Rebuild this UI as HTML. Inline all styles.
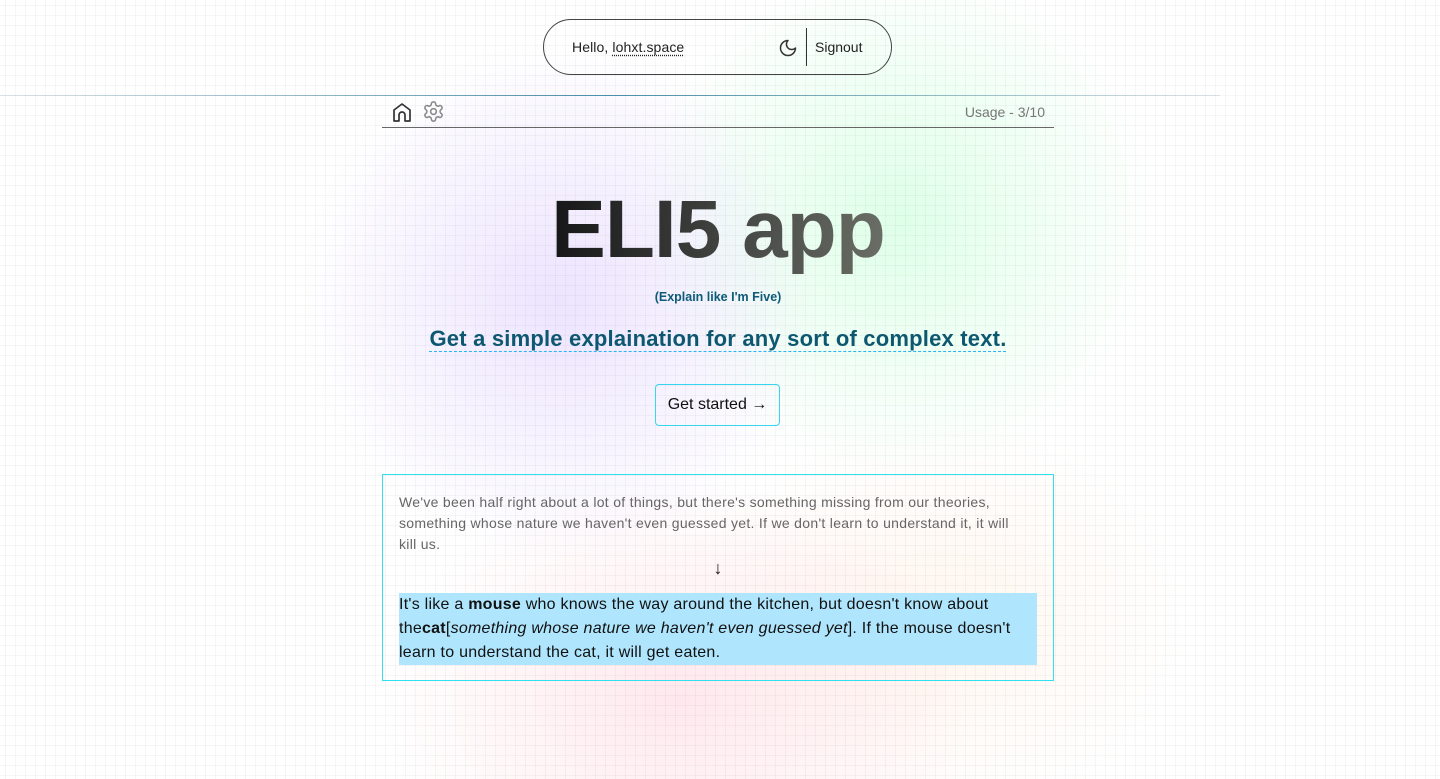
<!DOCTYPE html>
<html><head><meta charset="utf-8"><style>
html,body{margin:0;padding:0;width:1440px;height:779px;overflow:hidden;font-family:"Liberation Sans",sans-serif;}
body{background:#fff;position:relative;}
.bg{position:absolute;inset:0;background:
radial-gradient(ellipse 260px 260px at 560px 300px,rgba(215,195,255,.45),transparent),
radial-gradient(ellipse 260px 260px at 900px 220px,rgba(190,255,210,.5),transparent),
radial-gradient(ellipse 300px 220px at 680px 700px,rgba(255,205,215,.45),transparent),
radial-gradient(ellipse 250px 200px at 940px 620px,rgba(255,230,210,.35),transparent);}
.grid{position:absolute;inset:0;background-image:linear-gradient(to right,rgba(0,0,0,.035) 1px,transparent 1px),linear-gradient(to bottom,rgba(0,0,0,.035) 1px,transparent 1px);background-size:10px 10px;background-position:5px 5px;}
.pill{position:absolute;left:543px;top:19px;width:349px;height:56px;border:1px solid #444;border-radius:28px;box-sizing:border-box;}
.pill .h{position:absolute;left:28px;top:19px;font-size:14px;color:#222;letter-spacing:.1px;}
.pill .h u{text-decoration:underline dotted;text-underline-offset:3px;}
.pill .sep{position:absolute;left:262px;top:8px;width:1px;height:38px;background:#333;}
.pill .so{position:absolute;left:271px;top:19px;font-size:14px;color:#222;}
.pill svg{position:absolute;left:234px;top:18px;}
.hr1{position:absolute;left:0;right:220px;top:95px;height:1px;background:linear-gradient(to right,rgba(60,100,130,.15),#4a8fa8 50%,rgba(60,100,130,.15));}
.hr2{position:absolute;left:382px;width:672px;top:127px;height:1px;background:#666;}
.usage{position:absolute;right:395px;top:104px;font-size:14px;color:#777;}
h1{position:absolute;left:0;width:1436px;top:180px;margin:0;text-align:center;font-size:82px;font-weight:bold;letter-spacing:-1px;line-height:100px;}
h1 span{background:linear-gradient(to right,#161618,#6a6e66);-webkit-background-clip:text;color:transparent;}
.sub{position:absolute;left:0;width:1436px;top:290px;text-align:center;font-size:12.5px;font-weight:bold;color:#0e5a78;}
.tag{position:absolute;left:0;width:1436px;top:326px;text-align:center;font-size:22px;font-weight:bold;color:#0d5870;letter-spacing:.2px;}
.tag span{text-decoration:underline dashed #29b6f6;text-underline-offset:5px;text-decoration-thickness:1px;}
.btn{position:absolute;left:655px;top:384px;width:125px;height:42px;box-sizing:border-box;border:1px solid #35d6ee;border-radius:4px;font-size:16px;line-height:40px;text-align:center;color:#111;}
.card{position:absolute;left:382px;top:474px;width:672px;height:207px;box-sizing:border-box;border:1px solid #2ee0f0;}
.q{position:absolute;left:16px;top:17px;width:624px;font-size:14px;line-height:21px;color:#666;letter-spacing:.3px;}
.arr{position:absolute;left:0;width:670px;top:83px;text-align:center;font-size:18px;color:#111;}
.ans{position:absolute;left:16px;top:118px;width:638px;background:#b0e6fd;font-size:16px;line-height:24px;color:#111;letter-spacing:.25px;}
</style></head><body>
<div class="bg"></div><div class="grid"></div>
<div class="pill"><div class="h">Hello, <u>lohxt.space</u></div>
<svg width="20" height="20" viewBox="0 0 24 24" fill="none" stroke="#333" stroke-width="1.8" stroke-linecap="round" stroke-linejoin="round"><path d="M12 3a6 6 0 0 0 9 9 9 9 0 1 1-9-9Z"/></svg>
<div class="sep"></div><div class="so">Signout</div></div>
<div class="hr1"></div>
<svg style="position:absolute;left:390px;top:100px" width="24" height="24" viewBox="0 0 24 24" fill="none" stroke="#333" stroke-width="1.7" stroke-linecap="round" stroke-linejoin="round"><path d="M4 21V10l8-6 8 6v11h-5v-6a3 3 0 0 0-6 0v6Z"/></svg>
<svg style="position:absolute;left:422px;top:100px" width="23" height="23" viewBox="0 0 24 24" fill="none" stroke="#888" stroke-width="1.6" stroke-linecap="round" stroke-linejoin="round"><path d="M12.22 2h-.44a2 2 0 0 0-2 2v.18a2 2 0 0 1-1 1.73l-.43.25a2 2 0 0 1-2 0l-.15-.08a2 2 0 0 0-2.73.73l-.22.38a2 2 0 0 0 .73 2.73l.15.1a2 2 0 0 1 1 1.72v.51a2 2 0 0 1-1 1.74l-.15.09a2 2 0 0 0-.73 2.73l.22.38a2 2 0 0 0 2.73.73l.15-.08a2 2 0 0 1 2 0l.43.25a2 2 0 0 1 1 1.73V20a2 2 0 0 0 2 2h.44a2 2 0 0 0 2-2v-.18a2 2 0 0 1 1-1.73l.43-.25a2 2 0 0 1 2 0l.15.08a2 2 0 0 0 2.73-.73l.22-.39a2 2 0 0 0-.73-2.730l-.15-.08a2 2 0 0 1-1-1.74v-.5a2 2 0 0 1 1-1.74l.15-.09a2 2 0 0 0 .73-2.73l-.22-.38a2 2 0 0 0-2.73-.73l-.15.08a2 2 0 0 1-2 0l-.43-.25a2 2 0 0 1-1-1.73V4a2 2 0 0 0-2-2z"/><circle cx="12" cy="12" r="3"/></svg>
<div class="usage">Usage - 3/10</div>
<div class="hr2"></div>
<h1><span>ELI5 app</span></h1>
<div class="sub">(Explain like I'm Five)</div>
<div class="tag"><span>Get a simple explaination for any sort of complex text.</span></div>
<div class="btn">Get started →</div>
<div class="card">
<div class="q">We've been half right about a lot of things, but there's something missing from our theories, something whose nature we haven't even guessed yet. If we don't learn to understand it, it will kill us.</div>
<div class="arr">↓</div>
<div class="ans">It's like a <b>mouse</b> who knows the way around the kitchen, but doesn't know about the<b>cat</b>[<i>something whose nature we haven't even guessed yet</i>]. If the mouse doesn't learn to understand the cat, it will get eaten.</div>
</div>
</body></html>
